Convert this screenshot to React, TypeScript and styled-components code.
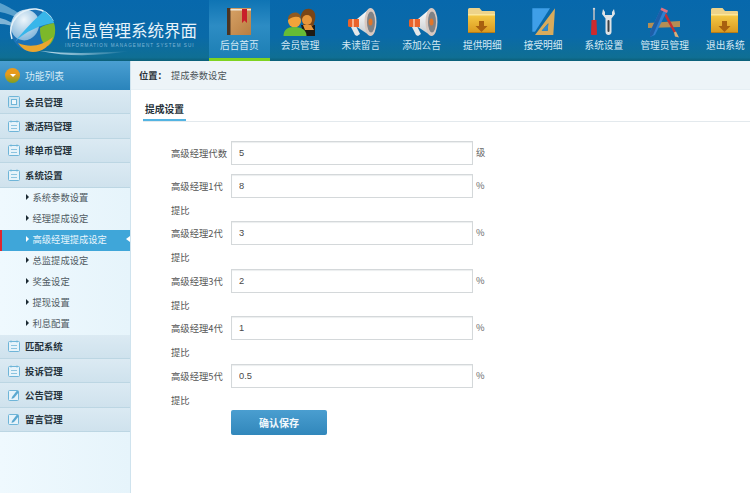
import type { ReactElement } from "react";
import styled, { createGlobalStyle } from "styled-components";

const GlobalStyle = createGlobalStyle`
  html, body {
    margin: 0;
    padding: 0;
    background: #fff;
    font-family: "Noto Sans CJK SC", "Liberation Sans", sans-serif;
  }
  * { box-sizing: border-box; }
`;

const Page = styled.div`
  width: 750px;
  height: 493px;
  overflow: hidden;
  display: flex;
  flex-direction: column;
`;

const Header = styled.header`
  height: 61px;
  display: flex;
  background: linear-gradient(#0768ac 0%, #0a6aa8 60%, #0f6f94 94%, #0b5f78 100%);
  flex: none;
`;

const Brand = styled.div`
  width: 209px;
  position: relative;
  overflow: hidden;
  display: flex;
  flex-direction: column;
  padding: 18px 0 0 65px;
  flex: none;
`;

const BrandArt = styled.svg`
  position: absolute;
  left: 0;
  top: 0;
`;

const BrandTitle = styled.div`
  position: relative;
  font-size: 16.5px;
  line-height: 24px;
  color: #e6f3fa;
  white-space: nowrap;
`;

const BrandSub = styled.div`
  position: relative;
  font-family: "Liberation Sans", sans-serif;
  font-size: 4.6px;
  line-height: 6px;
  letter-spacing: 1.05px;
  color: #7fb6d6;
  white-space: nowrap;
  margin-top: 1px;
`;

const Nav = styled.nav`
  display: flex;
  flex: 1;
`;

const NavItem = styled.div<{ $active?: boolean }>`
  width: 60.75px;
  height: 61px;
  display: flex;
  flex-direction: column;
  align-items: center;
  padding-top: 7px;
  flex: none;
  background: ${({ $active }) =>
    $active ? "linear-gradient(#0f74b4, #2d8cc4 45%, #1c7fb4)" : "none"};
  border-bottom: 3px solid ${({ $active }) => ($active ? "#7ed321" : "transparent")};
`;

const NavIcon = styled.svg`
  width: 30px;
  height: 30px;
  flex: none;
  overflow: visible;
`;

const NavLabel = styled.span`
  font-size: 9.7px;
  line-height: 14px;
  margin-top: 1px;
  color: #d5e9f5;
  white-space: nowrap;
`;

const Body = styled.div`
  flex: 1;
  display: flex;
  min-height: 0;
`;

const Sidebar = styled.aside`
  width: 131px;
  flex: none;
  background: linear-gradient(90deg, #eff9fe, #e6f4fb);
  border-right: 1px solid #cfe3ee;
`;

const SideTitle = styled.div`
  height: 29px;
  display: flex;
  align-items: center;
  gap: 5px;
  padding-left: 5px;
  background: linear-gradient(#4a9fd2, #2a84bb);
  font-size: 9.75px;
  color: #d9edf8;
`;

const SideBadge = styled.span`
  width: 15px;
  height: 15px;
  border-radius: 50%;
  background: linear-gradient(#e89a1c 40%, #7f9f20 100%);
  position: relative;
  &::after {
    content: "";
    position: absolute;
    left: 4.500px;
    top: 5.500px;
    border: 3px solid transparent;
    border-top: 3.500px solid #fff;
  }
`;

const MenuRow = styled.div`
  height: 24.4px;
  display: flex;
  align-items: center;
  gap: 5px;
  padding-left: 8px;
  background: linear-gradient(#dbeaf3, #cfe2ed);
  border-bottom: 1px solid #bcd6e3;
  font-size: 9.4px;
  font-weight: 700;
  color: #24313a;
`;

const MenuIcon = styled.svg`
  width: 12px;
  height: 12px;
  flex: none;
`;

const SubList = styled.div`
  display: flex;
  flex-direction: column;
`;

const SubRow = styled.div<{ $active?: boolean }>`
  height: 21px;
  display: flex;
  align-items: center;
  gap: 3.5px;
  position: relative;
  padding: 0 0 2px 26px;
  font-size: 9.3px;
  color: ${({ $active }) => ($active ? "#e8f5fc" : "#4f5a62")};
  background: ${({ $active }) => ($active ? "#3fa6d9" : "none")};
  ${({ $active }) =>
    $active
      ? `
  &::before {
    content: "";
    position: absolute;
    left: 0;
    top: 0;
    bottom: 0;
    width: 2px;
    background: #e0262e;
  }
  &::after {
    content: "";
    position: absolute;
    right: 0;
    top: 6px;
    border: 3.5px solid transparent;
    border-right: 4px solid #fff;
    border-left: 0;
  }`
      : ""}
`;

const SubArrow = styled.span<{ $active?: boolean }>`
  width: 0;
  height: 0;
  border: 3px solid transparent;
  border-left: 3.5px solid ${({ $active }) => ($active ? "#fff" : "#1c2a33")};
  border-right: 0;
`;

const Main = styled.main`
  flex: 1;
  min-width: 0;
  display: flex;
  flex-direction: column;
`;

const Crumb = styled.div`
  height: 29px;
  flex: none;
  display: flex;
  align-items: center;
  padding-left: 8px;
  gap: 4px;
  background: #edf4f8;
  border-bottom: 1px solid #e6eff4;
  font-size: 9.3px;
  color: #4b5359;
`;

const CrumbKey = styled.b`
  color: #2b3338;
`;

const TabBar = styled.div`
  margin-left: 12px;
  height: 32px;
  display: flex;
  align-items: flex-end;
  border-bottom: 1px solid #e3e9ed;
`;

const Tab = styled.div`
  width: 43px;
  height: 30px;
  display: flex;
  align-items: center;
  justify-content: center;
  padding-top: 8px;
  border-bottom: 2px solid #53b4e2;
  font-size: 9.75px;
  font-weight: 700;
  color: #26323a;
`;

const Form = styled.form`
  display: flex;
  flex-direction: column;
  padding: 18.7px 0 0 40px;
`;

const Row = styled.div`
  display: flex;
  align-items: flex-start;
  height: 47.5px;
  &:first-child {
    height: 33px;
  }
`;

const Label = styled.label`
  width: 60px;
  font-size: 9.33px;
  line-height: 24px;
  color: #555;
  flex: none;
  span {
    display: block;
  }
`;

const Input = styled.input`
  width: 242px;
  height: 24px;
  padding: 0 7px;
  border: 1px solid #d4d8da;
  box-shadow: inset 0 1px 1px #eceeef;
  background: #fff;
  font-family: "Liberation Sans", sans-serif;
  font-size: 9.3px;
  color: #4a4a4a;
  outline: none;
  flex: none;
`;

const Unit = styled.span`
  margin-left: 3px;
  font-size: 9.3px;
  line-height: 22px;
  color: #666;
`;

const SaveButton = styled.button`
  width: 96px;
  height: 25px;
  margin: -1.5px 0 0 60px;
  border: none;
  border-radius: 2px;
  background: linear-gradient(#4a9ed0, #3187bb);
  color: #f2f8fc;
  font-family: "Noto Sans CJK SC", sans-serif;
  font-size: 10px;
  font-weight: 700;
`;

const Folder = () => (
  <>
    <defs>
      <linearGradient id="folderFace" x1="0" y1="0" x2="0" y2="1">
        <stop offset="0" stopColor="#f6cc48" />
        <stop offset="1" stopColor="#d9981e" />
      </linearGradient>
    </defs>
    <path d="M1 2.500q0-1.500 1.500-1.500h10l2.500 3h12q1 0 1 1V9H1z" fill="#edd38a" />
    <path d="M1 7h27v19H1z" fill="url(#folderFace)" />
    <path d="M1 7h27v1.500H1z" fill="#fbe69a" />
    <path d="M1 25h27v1H1z" fill="#b67c18" />
    <path d="M12 14h5v5h3.500l-6 6-6-6H12z" fill="#a8600f" />
  </>
);

const Horn = () => (
  <>
    <defs>
      <linearGradient id="hornCone" x1="0" y1="0" x2="0" y2="1">
        <stop offset="0" stopColor="#ffffff" />
        <stop offset="1" stopColor="#c6ccd0" />
      </linearGradient>
    </defs>
    <path d="M5 20l5-1 4 8-3 2-2-1z" fill="#e4e7e9" />
    <path d="M11 12L23 2v26L11 20z" fill="url(#hornCone)" />
    <path d="M2 13.500q0-1.500 1.500-1.500H13v8H3.500Q2 20 2 18.500z" fill="#e9622a" />
    <rect x="6" y="12" width="2" height="8" fill="#f7b08a" />
    <ellipse cx="24.500" cy="15" rx="6" ry="14" fill="#d8c8c0" />
    <ellipse cx="25" cy="15" rx="4" ry="10.500" fill="#7f8286" />
    <ellipse cx="24.500" cy="15" rx="2" ry="3.500" fill="#e0762a" />
  </>
);

const icons: Record<string, ReactElement> = {
  book: (
    <>
      <defs>
        <linearGradient id="bookCover" x1="0" y1="0" x2="1" y2="1">
          <stop offset="0" stopColor="#d9a468" />
          <stop offset="1" stopColor="#b87e42" />
        </linearGradient>
      </defs>
      <rect x="3" y="1" width="24" height="27" fill="url(#bookCover)" />
      <rect x="3" y="1" width="3.500" height="27" fill="#4b3422" />
      <rect x="6.500" y="2" width="20.500" height="1.500" fill="#efe6d6" />
      <path d="M18 2h5v14l-2.500-2.500L18 16z" fill="#c8202a" />
    </>
  ),
  people: (
    <>
      <path d="M16 18h14v11H19z" fill="#1f1a14" />
      <path d="M16 12c-1-8 5-11 9-10 5 1 6 6 5 11-1 3-1 5-2 6h-9z" fill="#7a4516" />
      <circle cx="22" cy="13" r="5" fill="#e8963a" />
      <path d="M18 18h8l3 5h-9z" fill="#e8963a" />
      <circle cx="9.500" cy="14" r="6.500" fill="#f2a33a" />
      <path d="M3 13c-1-8 12-11 13-2-4-2-8-2-13 2z" fill="#8f5a20" />
      <path d="M-1.500 29c0-6 4-9 10-9 7 0 13 2 13 9z" fill="#66bc36" />
    </>
  ),
  horn: <Horn />,
  folder: <Folder />,
  ruler: (
    <>
      <path d="M4.300 1.300H22L7 24.700H4.300z" fill="#3f9fe8" />
      <path d="M27 1.300L25.300 28H7zM20.300 16.300l-6.600 7.400h6z" fill="#d8ab5c" fillRule="evenodd" />
      <path d="M20.300 16.300l-6.600 7.400h6z" fill="#2f88cc" />
    </>
  ),
  tools: (
    <>
      <circle cx="5" cy="2" r="1.200" fill="#d8dcdf" />
      <rect x="4.200" y="2" width="1.600" height="11" fill="#b8bec2" />
      <path d="M2.500 13h5l.5 14q0 1-1 1H3q-1 0-1-1z" fill="#cc2a2e" />
      <path d="M14 2l-1 5 3.500 4.500V25c0 4 6 4 6 0V11.500L26 7l-1-5-2 3v3h-7V5z" fill="#dfe3e6" />
      <rect x="18.500" y="13" width="2" height="12" rx="1" fill="#3a4044" />
    </>
  ),
  admin: (
    <>
      <path d="M-2 16l32-2v6l-32 1z" fill="#b48e54" />
      <path d="M13 6l2-2 11 21-2 1z" fill="#c23034" />
      <path d="M24 25.500l2-1 3 6-4-1z" fill="#dcae78" />
      <path d="M11 1l6 3L5 28l-5 2 0-5z" fill="#2f7fd0" />
      <path d="M11 1l3 1.500L3 28l-3 2 0-5z" fill="#1d5fa8" />
      <path d="M11.500 .5l6.500 3-1 2.500-6.500-3z" fill="#e2707e" />
    </>
  ),
};

const navItems = [
  { label: "后台首页", icon: "book", active: true },
  { label: "会员管理", icon: "people" },
  { label: "未读留言", icon: "horn" },
  { label: "添加公告", icon: "horn" },
  { label: "提供明细", icon: "folder" },
  { label: "接受明细", icon: "ruler" },
  { label: "系统设置", icon: "tools" },
  { label: "管理员管理", icon: "admin" },
  { label: "退出系统", icon: "folder" },
];

const subItems = ["系统参数设置", "经理提成设定", "高级经理提成设定", "总监提成设定", "奖金设定", "提现设置", "利息配置"];

const formRows = [
  { label: "高级经理代数", value: "5", unit: "级" },
  { label: "高级经理1代", tail: "提比", value: "8", unit: "%" },
  { label: "高级经理2代", tail: "提比", value: "3", unit: "%" },
  { label: "高级经理3代", tail: "提比", value: "2", unit: "%" },
  { label: "高级经理4代", tail: "提比", value: "1", unit: "%" },
  { label: "高级经理5代", tail: "提比", value: "0.5", unit: "%" },
];

const BoxIcon = () => (
  <MenuIcon viewBox="0 0 12 12">
    <rect x="0.500" y="0.500" width="11" height="11" rx="1" fill="#cfe6f2" stroke="#6fb5d8" />
    <rect x="3.500" y="3.500" width="5" height="5" fill="#eef7fb" stroke="#6fb5d8" />
  </MenuIcon>
);

const ListIcon = () => (
  <MenuIcon viewBox="0 0 12 12">
    <rect x="0.500" y="1.500" width="11" height="10" rx="1" fill="#e6f3fa" stroke="#6fb5d8" />
    <path d="M3 .5v2M9 .5v2" stroke="#6fb5d8" />
    <path d="M3 5.500h6M3 8.500h6" stroke="#8cc4e0" />
  </MenuIcon>
);

const EditIcon = () => (
  <MenuIcon viewBox="0 0 12 12">
    <rect x="0.500" y="1.500" width="10" height="10" rx="1" fill="#e6f3fa" stroke="#6fb5d8" />
    <path d="M4 8l5-6.500 2 1.500-5 6-2.500 1z" fill="#5ba8d0" />
  </MenuIcon>
);

const menuIcons = { box: BoxIcon, list: ListIcon, edit: EditIcon };

const Menu = ({ label, icon = "list" }: { label: string; icon?: keyof typeof menuIcons }) => {
  const Icon = menuIcons[icon];
  return (
    <MenuRow>
      <Icon />
      {label}
    </MenuRow>
  );
};

const App = () => (
  <Page>
    <GlobalStyle />
    <Header>
      <Brand>
        <BrandArt width="209" height="61" viewBox="0 0 209 61">
          <defs>
            <radialGradient id="globe" cx="0.4" cy="0.35" r="0.7">
              <stop offset="0" stopColor="#eef6fb" />
              <stop offset="1" stopColor="#7fb4da" />
            </radialGradient>
            <linearGradient id="flare" x1="0" y1="0" x2="1" y2="0">
              <stop offset="0" stopColor="#d8eef8" stopOpacity="0.9" />
              <stop offset="1" stopColor="#d8eef8" stopOpacity="0" />
            </linearGradient>
          </defs>
          <path d="M0 3c12 5 24 14 50 28C30 24 12 14 0 12z" fill="#9fd0ea" opacity="0.55" />
          <path d="M0 18c8 2 14 6 20 10C12 26 6 24 0 24z" fill="#cfe8f5" opacity="0.6" />
          <path d="M40 51c30 3 60 2 90 0-30 5-62 6-90 0z" fill="url(#flare)" />
          <circle cx="33" cy="30" r="22" fill="#1c72b6" />
          <ellipse cx="25" cy="25" rx="14" ry="15.500" fill="url(#globe)" transform="rotate(20 25 25)" />
          <path d="M12 39C6 21 22 8 36 9c8 1 14 6 17 12" fill="none" stroke="#e4f1f8" strokeWidth="1.500" />
          <path d="M44 11c6 4 9 8 10 12-12 1-30 9-39 19 7-10 21-24 29-31z" fill="#38b6ea" />
          <path d="M54 23c3 9 0 19-6 23-6-2-8-8-8-18 4-3 9-4 14-5z" fill="#7cb82a" />
          <path d="M18 43c12 5 24 3 35-6-3 9-11 15-20 15-6 0-12-4-15-9z" fill="#eaa62e" />
        </BrandArt>
        <BrandTitle>信息管理系统界面</BrandTitle>
        <BrandSub>INFORMATION MANAGEMENT SYSTEM SUI</BrandSub>
      </Brand>
      <Nav>
        {navItems.map((item) => (
          <NavItem key={item.label} $active={item.active}>
            <NavIcon viewBox="0 0 30 30">{icons[item.icon]}</NavIcon>
            <NavLabel>{item.label}</NavLabel>
          </NavItem>
        ))}
      </Nav>
    </Header>
    <Body>
      <Sidebar>
        <SideTitle>
          <SideBadge />
          功能列表
        </SideTitle>
        <Menu label="会员管理" icon="box" />
        <Menu label="激活码管理" />
        <Menu label="排单币管理" />
        <Menu label="系统设置" />
        <SubList>
          {subItems.map((name, i) => (
            <SubRow key={name} $active={i === 2}>
              <SubArrow $active={i === 2} />
              {name}
            </SubRow>
          ))}
        </SubList>
        <Menu label="匹配系统" />
        <Menu label="投诉管理" />
        <Menu label="公告管理" icon="edit" />
        <Menu label="留言管理" icon="edit" />
      </Sidebar>
      <Main>
        <Crumb>
          <CrumbKey>位置：</CrumbKey>
          提成参数设定
        </Crumb>
        <TabBar>
          <Tab>提成设置</Tab>
        </TabBar>
        <Form>
          {formRows.map((row) => (
            <Row key={row.label}>
              <Label>
                {row.label}
                {row.tail && <span>{row.tail}</span>}
              </Label>
              <Input defaultValue={row.value} />
              <Unit>{row.unit}</Unit>
            </Row>
          ))}
          <SaveButton type="button">确认保存</SaveButton>
        </Form>
      </Main>
    </Body>
  </Page>
);

export default App;
